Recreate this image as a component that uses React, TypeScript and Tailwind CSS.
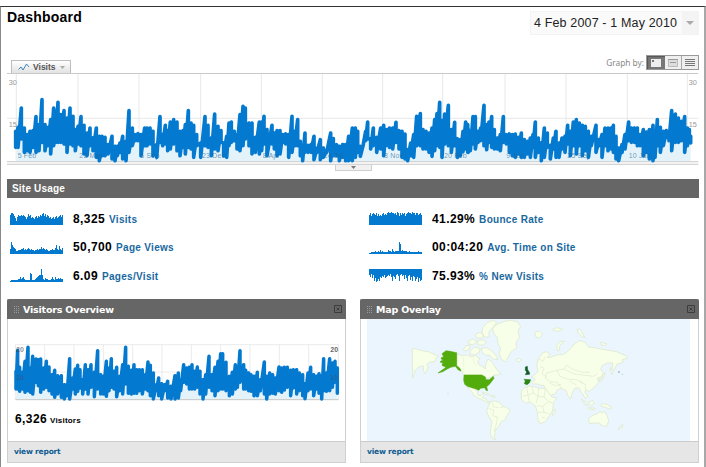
import { ReactNode } from "react";

// flat list of x, top, bottom triples, shifted by dx / dy
interface Segment {
  dx: number;
  dy: number;
  points: number[];
}

const visits: Segment[] = [
  {
    dx: 0,
    dy: 0,
    points: [
      47, 390, 445, 54, 378, 445, 64, 320, 420, 73, 380, 460, 81, 400, 455, 90, 390, 460, 99, 388, 445, 108, 346, 460,
      117, 370, 455, 126, 295, 430, 135, 370, 455, 144, 378, 440, 152, 355, 465, 161, 320, 440, 167, 330, 430, 174, 303, 430,
      182, 340, 430, 192, 328, 435, 201, 350, 460, 210, 320, 435, 219, 345, 440, 226, 385, 455, 234, 375, 435, 243, 346, 440,
      252, 372, 465, 261, 395, 470, 270, 380, 440, 279, 410, 455, 289, 380, 475, 298, 405, 485, 306, 405, 470, 315, 408, 470,
      324, 430, 465, 336, 405, 480, 345, 435, 485, 352, 435, 470, 360, 425, 460, 368, 405, 480, 378, 420, 485, 387, 328, 460,
      397, 380, 440, 405, 400, 425, 414, 397, 425, 423, 400, 470, 434, 380, 440, 441, 380, 440, 450, 380, 435, 459, 390, 470,
      470, 430, 475, 480, 346, 430, 488, 400, 440, 496, 372, 435, 503, 388, 455, 511, 362, 450, 521, 355, 435, 531, 362, 455,
      540, 390, 470, 549, 388, 445, 556, 370, 465, 565, 328, 445, 573, 365, 450, 581, 372, 475, 590, 400, 440, 602, 425, 475,
      615, 346, 440, 624, 372, 445, 634, 410, 470, 644, 338, 450, 654, 375, 455, 663, 388, 430, 671, 425, 470, 680, 405, 475,
      687, 365, 440, 694, 362, 430, 703, 390, 425, 711, 400, 450, 720, 340, 455,
    ],
  },
  {
    dx: 690,
    dy: 150,
    points: [
      39, 165, 290, 46, 170, 270, 57, 215, 290, 66, 215, 315, 76, 258, 310, 88, 212, 315, 95, 212, 305, 102, 195, 285,
      111, 235, 320, 126, 222, 285, 133, 245, 300, 141, 238, 320, 150, 238, 315, 158, 250, 280, 167, 248, 285, 176, 250, 325,
      186, 195, 310, 194, 240, 290, 203, 205, 290, 211, 270, 320, 218, 285, 335, 225, 245, 310, 234, 282, 310, 243, 280, 310,
      252, 255, 332, 261, 290, 310, 271, 265, 332, 280, 290, 325, 290, 297, 310, 302, 245, 335, 310, 262, 320, 320, 280, 320,
      328, 285, 335, 338, 280, 325, 347, 280, 335, 356, 255, 335, 367, 230, 335, 376, 230, 325, 383, 240, 310, 391, 285, 322,
      400, 280, 285, 407, 240, 275, 413, 212, 270, 422, 262, 300, 430, 230, 290, 440, 258, 310, 452, 230, 300, 461, 222, 320,
      468, 235, 290, 478, 230, 295, 488, 230, 300, 498, 213, 280, 507, 238, 300, 516, 240, 325, 525, 248, 330, 533, 295, 335,
      542, 275, 320, 551, 250, 325, 560, 195, 290, 571, 187, 290, 579, 235, 300, 588, 240, 300, 597, 245, 310, 606, 230, 322,
      614, 205, 305, 621, 187, 290, 629, 153, 295, 636, 208, 325, 644, 188, 285, 655, 162, 290, 664, 235, 310, 674, 213, 290,
      682, 262, 325, 691, 265, 320, 699, 240, 308, 707, 212, 300, 715, 235, 310,
    ],
  },
  {
    dx: 1398,
    dy: 0,
    points: [
      5, 370, 460, 13, 398, 455, 21, 346, 435, 28, 346, 450, 36, 390, 430, 44, 380, 425, 54, 312, 440, 62, 370, 452,
      69, 362, 430, 77, 346, 445, 85, 385, 450, 94, 410, 450, 103, 400, 455, 112, 346, 430, 121, 400, 435, 130, 398, 460,
      139, 400, 470, 148, 398, 475, 157, 408, 465, 166, 395, 475, 175, 415, 475, 184, 420, 465, 193, 410, 475, 201, 400, 445,
      208, 362, 475, 217, 410, 460, 226, 425, 485, 235, 380, 475, 244, 395, 445, 253, 432, 480, 262, 410, 450, 270, 390, 475,
      279, 425, 475, 288, 410, 450, 297, 405, 460, 305, 372, 435, 313, 390, 470, 322, 362, 440, 331, 355, 465, 340, 365, 440,
      349, 372, 470, 358, 375, 455, 367, 390, 475, 376, 405, 440, 390, 372, 460, 399, 415, 440, 408, 400, 475, 417, 380, 440,
      426, 380, 455, 435, 380, 450, 442, 372, 460, 450, 405, 480, 458, 440, 485, 468, 430, 460, 477, 400, 450, 488, 362, 425,
      496, 380, 430, 505, 380, 430, 514, 380, 440, 523, 400, 440, 532, 385, 470, 541, 392, 460, 550, 385, 480, 561, 372, 485,
      567, 405, 475, 574, 355, 440, 583, 378, 460, 592, 390, 440, 601, 388, 415, 609, 400, 425, 617, 328, 455, 628, 338, 430,
      637, 350, 430, 646, 360, 425, 656, 346, 460, 664, 380, 440, 670, 385, 430, 674, 405, 432,
    ],
  },
];

const visitors: Segment[] = [
  {
    dx: 0,
    dy: 0,
    points: [
      48, 225, 285, 53, 162, 285, 59, 213, 292, 67, 228, 285, 75, 195, 295, 84, 153, 290, 91, 215, 295, 98, 180, 300,
      108, 188, 265, 115, 190, 275, 122, 188, 295, 131, 215, 285, 139, 195, 280, 147, 212, 290, 156, 235, 300, 164, 222, 310,
      173, 238, 300, 184, 238, 310, 193, 265, 315, 201, 265, 305, 209, 187, 315, 218, 245, 285, 226, 218, 300, 233, 207, 292,
      240, 220, 282, 248, 250, 300, 256, 205, 285, 264, 220, 300, 273, 205, 280, 283, 228, 308, 293, 163, 285, 302, 235, 300,
      310, 240, 300, 319, 195, 307, 327, 215, 290, 334, 187, 280, 342, 225, 285, 350, 213, 308, 359, 240, 290, 368, 205, 300,
      377, 153, 270, 385, 210, 298, 394, 222, 300, 402, 205, 298, 410, 220, 298, 418, 220, 290, 427, 220, 300, 436, 235, 285,
      444, 197, 290, 451, 207, 305, 460, 230, 315, 469, 265, 290, 476, 245, 305, 485, 262, 315, 494, 265, 290, 503, 255, 312,
      513, 270, 315, 525, 238, 315, 535, 230, 312, 542, 250, 290, 551, 205, 265, 560, 215, 270, 568, 213, 285, 576, 205, 285,
      584, 225, 285, 592, 212, 280, 600, 225, 300, 609, 250, 315, 617, 235, 300, 627, 180, 280, 636, 235, 290, 645, 213, 305,
      654, 195, 290, 662, 172, 285, 668, 172, 285, 678, 198, 290, 688, 240, 305, 697, 228, 300, 706, 205, 285, 712, 215, 280,
      720, 163, 265, 731, 205, 285, 737, 222, 285, 746, 230, 290, 753, 235, 292, 762, 240, 305, 772, 228, 305, 781, 250, 290,
      793, 197, 300, 800, 240, 315, 809, 230, 300, 818, 235, 298, 826, 245, 300, 837, 212, 290, 845, 215, 295, 853, 213, 288,
      862, 213, 280, 872, 222, 305, 880, 220, 282, 890, 220, 300, 898, 230, 290, 908, 235, 305, 915, 262, 314, 924, 230, 290,
      932, 213, 285, 941, 235, 305, 950, 240, 285, 957, 232, 298, 965, 238, 315, 971, 187, 290, 979, 230, 292, 989, 187, 290,
      997, 200, 280, 1005, 195, 265, 1012, 215, 298,
    ],
  },
];

function tracePath(segments: Segment[]): string {
  const out: string[] = [];
  segments.forEach(({ dx, dy, points }) => {
    for (let i = 0; i < points.length; i += 3) {
      const x = points[i] + dx;
      out.push(`${x} ${points[i + 1] + dy + 4} ${x} ${points[i + 2] + dy - 3}`);
    }
  });
  return `M${out.join("L")}`;
}

function areaPath(segments: Segment[], base: number): string {
  const out: string[] = [];
  segments.forEach(({ dx, dy, points }) => {
    for (let i = 0; i < points.length; i += 3) {
      out.push(`${points[i] + dx} ${points[i + 2] + dy - 8}`);
    }
  });
  const last = segments[segments.length - 1];
  const endX = last.points[last.points.length - 3] + last.dx;
  return `M${segments[0].points[0]} ${base}L${out.join("L")}L${endX} ${base}Z`;
}

const axisLabels = [
  { x: 53, text: "5 Feb" },
  { x: 238, text: "22 May" },
  { x: 421, text: "6 Sep" },
  { x: 606, text: "23 Dec" },
  { x: 788, text: "8 Apr" },
  { x: 971, text: "24 Jul" },
  { x: 1152, text: "8 Nov" },
  { x: 1332, text: "20 Feb" },
  { x: 1519, text: "9 Jun" },
  { x: 1702, text: "25 Sep" },
  { x: 1886, text: "10 Jan" },
];

function VisitsChart() {
  return (
    <svg className="block h-[92px] w-[692px]" viewBox="21 219 2076 276" fontFamily="Liberation Sans, sans-serif">
      {axisLabels.map((l) => (
        <path key={l.x} d={`M${l.x - 4} 222V484`} stroke="#e8e8e8" strokeWidth="3" />
      ))}
      <path d="M2062 222V484M21 355H2095" stroke="#e8e8e8" strokeWidth="3" />
      <path d={areaPath(visits, 484)} fill="#e4f2fa" />
      <path d="M21 220.500H2095" stroke="#c9c9c9" strokeWidth="3" />
      <path d="M21 485H2095M21 493H2095" stroke="#cccccc" strokeWidth="3" />
      <path d="M21 487H2095V491H21Z" fill="#f1f1f1" />
      <path d={tracePath(visits)} fill="none" stroke="#0479d0" strokeWidth="11" strokeLinejoin="round" strokeLinecap="round" />
      <g fontSize="21" fill="#1f6592" fillOpacity="0.65" letterSpacing="0.5">
        {axisLabels.map((l) => (
          <text key={l.x} x={l.x} y="473">{l.text}</text>
        ))}
      </g>
      <g fontSize="22" fill="#999">
        <text x="26" y="255">30</text>
        <text x="26" y="382">15</text>
        <text x="2066" y="255">30</text>
        <text x="2066" y="382">15</text>
      </g>
    </svg>
  );
}

function VisitorsChart() {
  return (
    <svg className="block h-[60px] w-[326px]" viewBox="42 144 978 180" fontFamily="Liberation Sans, sans-serif">
      <path
        d="M46 149H1016M46 231H1016M46 148V313M134 148V313M222 148V313M310 148V313M398 148V313M486 148V313M574 148V313M662 148V313M750 148V313M838 148V313M926 148V313M1015 148V313"
        stroke="#ebebeb"
        strokeWidth="3"
      />
      <path d={areaPath(visitors, 313)} fill="#e4f2fa" />
      <path d="M46 314H1016" stroke="#c4c4c4" strokeWidth="3" />
      <path d={tracePath(visitors)} fill="none" stroke="#0479d0" strokeWidth="10.500" strokeLinejoin="round" strokeLinecap="round" />
      <g fontSize="21" fill="#444" fontWeight="bold">
        <text x="48" y="172" fillOpacity="0.6">20</text>
        <text x="48" y="254" fillOpacity="0.4">10</text>
        <text x="991" y="172" fillOpacity="0.85">20</text>
        <text x="991" y="254" fillOpacity="0.4">10</text>
      </g>
    </svg>
  );
}

function Spark({ values, flip = false }: { values: number[]; flip?: boolean }) {
  const step = 53 / values.length;
  const d = values
    .map((v, i) => {
      const y = flip ? v : 13 - v;
      return `L${(i * step).toFixed(2)} ${y}H${((i + 1) * step).toFixed(2)}`;
    })
    .join("");
  const base = flip ? 0 : 13;
  return (
    <svg className="block h-[13px] w-[53px]" viewBox="0 0 53 13">
      <path d={`M0 ${base}${d}V${base}Z`} fill="#0479d0" />
    </svg>
  );
}

interface Metric {
  value: string;
  label: string;
  values: number[];
  flip?: boolean;
}

const leftMetrics: Metric[] = [
  {
    value: "8,325",
    label: "Visits",
    values: [10, 12, 12, 11, 9, 7, 4, 8, 10, 9, 9, 10, 9, 10, 9, 8, 6, 8, 11, 9, 10, 7, 8, 7, 6, 8, 9, 7, 9, 8, 10, 9, 11, 12, 9, 11, 8, 10, 9, 7, 8, 6, 7, 8, 6, 8, 9, 7, 8, 9, 10, 8, 10],
  },
  {
    value: "50,700",
    label: "Page Views",
    values: [5, 12, 9, 7, 6, 5, 3, 3, 4, 4, 4, 5, 5, 6, 4, 5, 4, 5, 6, 5, 4, 5, 4, 4, 3, 4, 4, 5, 4, 5, 5, 7, 5, 6, 5, 4, 5, 4, 3, 3, 4, 4, 5, 4, 4, 6, 9, 5, 4, 8, 5, 4, 6],
  },
  {
    value: "6.09",
    label: "Pages/Visit",
    values: [1, 2, 2, 2, 2, 2, 2, 2, 3, 3, 5, 3, 4, 5, 3, 2, 2, 2, 2, 2, 9, 8, 2, 2, 2, 3, 4, 5, 6, 7, 7, 13, 7, 3, 2, 4, 3, 3, 2, 2, 2, 3, 5, 3, 2, 5, 3, 3, 4, 3, 4, 3, 3],
  },
];

const rightMetrics: Metric[] = [
  {
    value: "41.29%",
    label: "Bounce Rate",
    values: [10, 12, 9, 11, 12, 11, 10, 12, 9, 11, 9, 10, 9, 11, 12, 10, 11, 10, 12, 13, 12, 12, 13, 12, 12, 11, 12, 10, 13, 12, 9, 12, 10, 12, 11, 12, 9, 11, 12, 13, 12, 12, 11, 13, 12, 12, 10, 12, 12, 10, 11, 12, 10],
  },
  {
    value: "00:04:20",
    label: "Avg. Time on Site",
    values: [1, 1, 2, 2, 2, 2, 3, 2, 2, 3, 2, 4, 2, 3, 2, 2, 2, 2, 2, 4, 3, 3, 2, 5, 3, 2, 3, 3, 3, 3, 12, 10, 3, 4, 3, 3, 3, 3, 2, 2, 3, 2, 2, 2, 2, 2, 2, 2, 2, 3, 2, 2, 2],
  },
  {
    value: "75.93%",
    label: "% New Visits",
    flip: true,
    values: [6, 8, 5, 9, 6, 12, 9, 13, 12, 10, 12, 8, 9, 7, 8, 6, 9, 8, 7, 6, 7, 5, 8, 12, 7, 8, 10, 6, 5, 7, 12, 6, 5, 7, 6, 10, 6, 9, 12, 7, 6, 11, 8, 12, 7, 8, 12, 10, 8, 13, 9, 12, 11],
  },
];

function MetricColumn({ metrics }: { metrics: Metric[] }) {
  return (
    <div className="flex w-[359px] shrink-0 flex-col gap-[11.500px]">
      {metrics.map((m) => (
        <div key={m.label} className="flex h-[17px] items-center gap-[10px]">
          <Spark values={m.values} flip={m.flip} />
          <div className="flex items-baseline gap-1 whitespace-nowrap font-bold leading-none">
            <span className="text-[12px] tracking-[0.400px] text-black">{m.value}</span>
            <span className="text-[10px] tracking-[0.300px] text-[#1a68a0]">{m.label}</span>
          </div>
        </div>
      ))}
    </div>
  );
}

function WorldMap() {
  return (
    <svg className="block h-[122px] w-[323px] bg-[#eaf5fe]" viewBox="21 72 969 366">
      <g fill="#f8ffe8" stroke="#dfe8d0" strokeWidth="2.500" strokeLinejoin="round">
        {/* Chukotka */}
        <path d="M157 160L172 163 190 168 205 170 222 178 236 184 228 190 224 200 210 201 200 208 205 216 196 236 190 226 190 212 176 216 166 226 158 248Z" />
        {/* Canada */}
        <path d="M290 176L305 182 320 180 335 186 346 180 360 192 352 200 358 210 370 216 375 222 378 206 384 192 396 200 404 214 414 228 424 236 410 240 402 240 395 246 383 250 368 240 312 240 303 226 290 212Z" />
        <path d="M310 164L318 152 330 150 328 162 318 168ZM330 168L342 156 360 160 358 172 344 180 332 178ZM364 160L380 158 396 168 408 182 414 194 400 192 390 182 376 180 366 172ZM326 138L340 132 350 138 342 148 328 148ZM352 138L368 134 380 142 370 150 354 150ZM346 118L360 112 372 120 364 130 348 128ZM368 98L382 82 400 76 410 82 398 98 386 112 388 126 372 126 366 114Z" />
        {/* Greenland */}
        <path d="M398 100L408 90 424 82 448 76 472 80 482 94 474 108 478 128 468 142 470 158 452 172 444 188 436 201 424 192 418 176 422 160 414 146 412 128 402 116Z" />
        <path d="M468 193L478 190 484 196 474 202Z" />
        {/* Central and South America */}
        <path d="M322 275L345 282 352 290 354 301 362 302 368 296 370 302 366 308 378 312 384 320 392 320 388 325 374 318 352 308 340 300 336 290 328 284Z" />
        <path d="M366 292L380 294 388 300 376 298ZM392 302L404 302 406 307 394 306Z" />
        <path d="M390 322L402 317 418 322 426 332 448 342 450 350 440 362 436 374 424 380 416 394 408 402 404 416 402 426 408 433 398 432 391 416 393 396 396 380 386 364 380 350 385 334Z" />
        {/* Eurasia */}
        <path d="M516 262L526 254 520 248 514 246 526 238 534 228 530 210 536 190 548 174 560 170 570 178 562 188 574 186 590 180 610 178 620 172 634 158 644 146 660 136 678 144 686 156 704 158 720 162 745 166 770 170 800 184 802 190 786 194 790 202 770 208 762 226 756 222 758 204 742 204 726 212 722 224 730 232 724 246 712 250 716 262 702 278 694 284 686 290 678 284 674 292 684 304 676 310 664 292 656 278 644 280 636 294 632 312 624 302 618 286 604 280 592 284 586 296 570 302 558 284 552 272 540 270 528 266 520 268Z" />
        {/* Africa */}
        <path d="M484 288L496 276 516 273 536 280 556 280 568 296 576 306 590 308 580 324 578 346 568 362 556 380 540 386 534 374 532 350 526 332 512 322 496 324 484 312Z" />
        <path d="M578 350L586 342 584 358 578 362Z" />
        {/* Oceania */}
        <path d="M686 372L696 362 712 356 720 350 728 354 734 348 742 364 746 378 740 394 728 392 716 384 702 384 688 386ZM774 404L782 392 788 388 786 396ZM724 326L740 328 756 338 748 342 734 336 724 334ZM686 322L698 316 702 326 694 332ZM664 312L674 318 684 332 676 330ZM684 338L706 340 702 344 686 342ZM716 250L724 254 728 240 736 232 730 250 720 262ZM752 218L758 232 756 240 750 226Z" />
        {/* Arctic islands */}
        <path d="M524 112L536 108 548 116 538 130 528 126ZM578 104L590 98 608 102 600 108 584 108ZM592 168L590 152 600 140 614 138 600 150 598 166ZM652 102L662 104 670 120 676 128 664 124 654 112ZM722 142L740 146 736 152 724 150Z" />
      </g>
      <g fill="none" stroke="#dde7ce" strokeWidth="2">
        <path d="M560 234L590 226 612 222 640 236 668 240 700 244 712 236M612 222L620 210 640 224 668 232 690 232M590 226L600 244 620 252 648 254 668 262M560 234L556 250 570 260 592 262 604 280M540 214L552 220 546 236 560 246M536 190L548 200 556 184M568 264L586 272 604 268M660 262L676 268 676 284M628 258L650 270" />
        <path d="M500 276L504 300 488 304M516 273L520 294 504 300 508 322M536 280L534 304 520 294M556 280L552 306 534 304 528 324M552 306L566 320 548 334 530 332M566 320L578 324M548 334L552 352 534 352M552 352L566 356M546 366L556 370M398 322L400 336 416 338M386 340L402 346 398 362 412 366 410 384 402 410M430 336L420 338" />
        <path d="M340 184L342 204 352 212M310 186L312 236" strokeOpacity="0.5" />
      </g>
      {/* United States */}
      <g fill="#52ad0c" stroke="#4da40b" strokeWidth="1.500" strokeLinejoin="round">
        <path d="M246 176L258 167 270 169 290 173 290 212 299 219 303 228 295 225 286 214 272 217 262 222 248 230 234 234 252 221 258 216 247 212 246 207 252 205 241 202 242 198 250 196 243 191 244 188 251 185Z" />
        <path d="M312 240L365 240 376 246 378 254 388 254 400 244 402 250 396 258 390 266 380 275 383 287 378 286 374 278 362 280 356 286 346 281 336 278 322 274 314 268 311 256Z" />
      </g>
      <circle cx="264" cy="296" r="2" fill="#cfdcc5" />
      <path d="M496 216L502 214 503 224 508 232 509 238 496 239 500 231 496 226Z" fill="#145b26" stroke="#145b26" strokeWidth="1.500" />
      <path d="M492 253L512 254 508 264 501 269 493 266 496 258Z" fill="#2b8613" stroke="#2b8613" strokeWidth="1.500" />
      <circle cx="777" cy="231" r="2" fill="#50828a" />
      <circle cx="787" cy="238" r="1.500" fill="#9bbabc" />
    </svg>
  );
}

function Panel({ title, children }: { title: string; children: ReactNode }) {
  return (
    <section className="flex h-[164px] w-[339px] flex-col border border-[#cfcfcf] border-t-0">
      <header className="-mx-px flex h-5 shrink-0 items-center rounded-t-[2px] bg-[#666] pl-[7px] pr-[4px]">
        <svg className="h-[7px] w-[6px]" viewBox="0 0 6 7" fill="#999">
          <path d="M0 0h1v1H0zM2 0h1v1H2zM4 0h1v1H4zM0 2h1v1H0zM2 2h1v1H2zM4 2h1v1H4zM0 4h1v1H0zM2 4h1v1H2zM4 4h1v1H4zM0 6h1v1H0zM2 6h1v1H2zM4 6h1v1H4z" />
        </svg>
        <h2 className="ml-[3px] mt-px font-['DejaVu_Sans'] text-[9.500px] font-bold leading-none tracking-[-0.200px] text-white">
          {title}
        </h2>
        <svg className="ml-auto h-[8px] w-[8px]" viewBox="0 0 8 8" fill="none" stroke="#3c3c3c">
          <path d="M.5.5h7v7h-7zM2.500 2.500l3 3M5.500 2.500l-3 3" />
        </svg>
      </header>
      <div className="h-[122px] shrink-0">{children}</div>
      <footer className="flex flex-1 items-center border-t border-[#cccccc] bg-[#e6e6e6] pl-[6px]">
        <a className="font-['DejaVu_Sans'] text-[7.500px] font-bold leading-none tracking-[-0.200px] text-[#0f5d92]">view report</a>
      </footer>
    </section>
  );
}

export default function App() {
  return (
    <div className="h-[467px] w-[706px] overflow-hidden bg-white pt-[6px] font-['Liberation_Sans',sans-serif]">
      <div className="flex h-[461px] w-[706px] flex-col border-l border-r-2 border-t border-l-[#8a8a8a] border-r-[#a8a8a8] border-t-[#333] pl-[6px]">
        <div className="flex h-[48px] w-[692px] justify-between pt-[3px]">
          <h1 className="text-[14px] font-bold leading-[14px] tracking-[0.200px] text-black">Dashboard</h1>
          <div className="mt-px flex h-[24px] w-[169px] items-center border border-[#f3f3f3] bg-[#fafafa]">
            <span className="w-[151px] shrink-0 whitespace-nowrap pl-[3px] text-[12.500px] leading-none tracking-[0.150px] text-[#222]">
              4 Feb 2007 - 1 May 2010
            </span>
            <span className="flex h-full flex-1 items-center justify-center bg-[#f4f4f4]">
              <svg className="h-[4px] w-[8px]" viewBox="0 0 8 4">
                <path d="M0 0h8L4 4z" fill="#aaa" />
              </svg>
            </span>
          </div>
        </div>

        <div className="flex h-[18px] w-[692px] items-end justify-between">
          <div className="ml-[4px] flex h-[13px] w-[60px] items-center border border-b-0 border-[#bdbdbd] bg-linear-to-b from-white to-[#e2e2e2] pl-[6px]">
            <svg className="h-[8px] w-[12px]" viewBox="0 0 12 8" fill="none" stroke="#3e86b8">
              <path d="M.5 6.500L3 4l2 3 3.500-6L11 4" />
            </svg>
            <span className="ml-[3px] text-[8.500px] font-bold leading-none text-[#555]">Visits</span>
            <svg className="ml-[4px] h-[3px] w-[5px]" viewBox="0 0 5 3">
              <path d="M0 0h5L2.500 3z" fill="#aaa" />
            </svg>
          </div>
          <div className="flex h-full items-start">
            <span className="mt-[4px] font-['Noto_Sans'] text-[8.300px] leading-none text-[#888]">Graph by:</span>
            <div className="ml-[2px] flex h-[15px] w-[53px] border border-[#999]">
              <span className="flex w-[18px] items-center justify-center bg-[#777] shadow-[inset_1px_1px_1px_#555]">
                <svg className="h-[8px] w-[10px]" viewBox="0 0 10 8">
                  <path d="M0 0h10v8H0z" fill="#eee" />
                  <path d="M1 1h2v2H1z" fill="#777" />
                </svg>
              </span>
              <span className="flex w-[17px] items-center justify-center border-r border-[#aaa] bg-[#efefef]">
                <svg className="h-[8px] w-[10px]" viewBox="0 0 10 8">
                  <path d="M.5.5h9v7h-9z" fill="#ddd" stroke="#bbb" />
                  <path d="M0 0h10v1H0zM2 3h6v1H2z" fill="#999" />
                </svg>
              </span>
              <span className="flex flex-1 items-center justify-center bg-[#efefef]">
                <svg className="h-[8px] w-[10px]" viewBox="0 0 10 8">
                  <path d="M0 0h10v1H0zM0 2h10v1H0zM0 4h10v1H0zM0 6h10v1H0z" fill="#777" />
                </svg>
              </span>
            </div>
          </div>
        </div>

        <VisitsChart />
        <div className="ml-[328px] flex h-[6px] w-[37px] items-center justify-center border border-t-0 border-[#cfcfcf] bg-[#f1f1f1]">
          <svg className="h-[3px] w-[5px]" viewBox="0 0 5 3">
            <path d="M0 0h5L2.500 3z" fill="#777" />
          </svg>
        </div>

        <h2 className="mt-[8px] flex h-[19px] w-[692px] shrink-0 items-center bg-[#666] pl-[5px] pt-px text-[10px] font-bold leading-none tracking-[0.200px] text-white">
          Site Usage
        </h2>
        <div className="flex pl-[3px] pt-[12px]">
          <MetricColumn metrics={leftMetrics} />
          <MetricColumn metrics={rightMetrics} />
        </div>

        <div className="mt-[15px] flex gap-[14px]">
          <Panel title="Visitors Overview">
            <div className="pl-[6px] pt-[24px]">
              <VisitorsChart />
              <p className="mt-[10px] flex items-baseline gap-[3px] pl-px font-bold leading-none text-black">
                <span className="text-[12px] tracking-[0.400px]">6,326</span>
                <span className="text-[8px] tracking-[0.200px]">Visitors</span>
              </p>
            </div>
          </Panel>
          <Panel title="Map Overlay">
            <div className="pl-[6px]">
              <WorldMap />
            </div>
          </Panel>
        </div>
      </div>
    </div>
  );
}
